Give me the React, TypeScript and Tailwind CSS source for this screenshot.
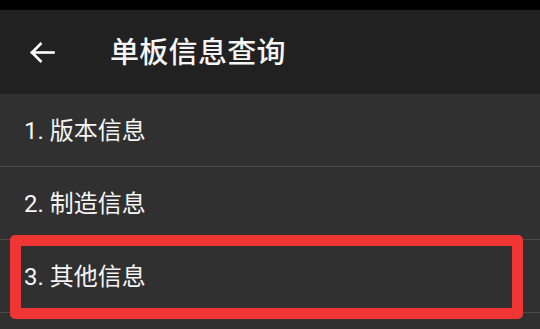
const items = ["1. 版本信息", "2. 制造信息", "3. 其他信息"];

export default function App() {
  return (
    <div
      className="relative w-[540px] h-[329px] overflow-hidden bg-[#303030] text-[#f5f5f5]"
      style={{ fontFamily: "Roboto, 'Noto Sans CJK SC', sans-serif" }}
    >
      {/* status bar */}
      <div className="h-[10px] bg-black" />

      {/* toolbar */}
      <div className="h-[84px] bg-[#212121] flex items-center">
        <div className="w-[30px]" />
        <svg width="25" height="23" viewBox="0 0 25 23" fill="none" stroke="white" strokeWidth="2.6" strokeLinecap="square">
          <path d="M2 11.5H23.5" />
          <path d="M11.5 2L2 11.5L11.5 21" strokeLinejoin="miter" strokeLinecap="butt" />
        </svg>
        <span className="ml-[55px] text-[29px] font-medium leading-none pt-[3px] tracking-[0.3px]">单板信息查询</span>
      </div>

      {/* list */}
      <div className="flex flex-col">
        {items.map((t) => (
          <div key={t} className="h-[73px] flex items-center border-b border-[#4a4a4a] pl-[24px] text-[24px]">
            <span className="leading-none pt-[1px]">{t}</span>
          </div>
        ))}
      </div>

      {/* highlight */}
      <div className="absolute left-[10px] top-[235px] w-[513px] h-[84px] border-[11px] border-[#f03535] rounded-[5px]" />
    </div>
  );
}
